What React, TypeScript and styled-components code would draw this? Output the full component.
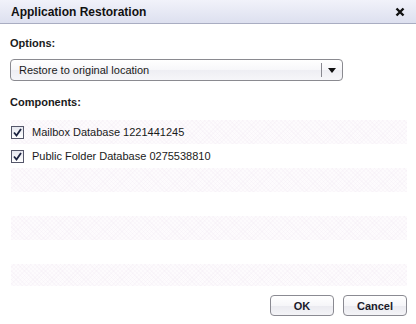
import * as React from 'react';
import styled, { createGlobalStyle } from 'styled-components';

const GlobalStyle = createGlobalStyle`
    html, body {
        margin: 0;
        padding: 0;
        background: #ffffff;
    }
    body {
        font-family: 'Liberation Sans', Arial, sans-serif;
        color: #1a1a1a;
    }
`;

const components = [
    'Mailbox Database 1221441245',
    'Public Folder Database 0275538810',
    '',
    '',
    '',
    '',
    ''
];

const CheckIcon = () => (
    <svg width="9" height="9" viewBox="0 0 9 9">
        <path d="M1 4.5 L3.5 7.5 L8 1" stroke="#1c2340" strokeWidth="1.8" fill="none" />
    </svg>
);

const App = () => (
    <Dialog>
        <GlobalStyle />
        <TitleBar>
            <Title>Application Restoration</Title>
            <CloseButton>
                <svg width="10" height="10" viewBox="0 0 10 10">
                    <path d="M1.5 1.5 L8.5 8.5 M8.5 1.5 L1.5 8.5" stroke="#111" strokeWidth="2.4" />
                </svg>
            </CloseButton>
        </TitleBar>
        <Body>
            <Label>Options:</Label>
            <Select>
                <SelectText>Restore to original location</SelectText>
                <SelectArrow>
                    <svg width="8" height="5" viewBox="0 0 8 5">
                        <path d="M0 0 H8 L4 5 Z" fill="#111" />
                    </svg>
                </SelectArrow>
            </Select>
            <Label>Components:</Label>
            <List>
                {components.map((name, i) => (
                    <Row key={i} striped={i % 2 === 0}>
                        {name && (
                            <>
                                <Checkbox><CheckIcon /></Checkbox>
                                <RowText>{name}</RowText>
                            </>
                        )}
                    </Row>
                ))}
            </List>
            <Footer>
                <Button>OK</Button>
                <Button>Cancel</Button>
            </Footer>
        </Body>
    </Dialog>
);

const Dialog = styled.div`
    width: 416px;
    height: 324px;
    background: #ffffff;
    display: flex;
    flex-direction: column;
    overflow: hidden;
`;

const TitleBar = styled.div`
    height: 23px;
    display: flex;
    align-items: center;
    justify-content: space-between;
    padding: 0 10px 0 11px;
    background: linear-gradient(#f1f2fa, #dde0ef);
    border-bottom: 1px solid #a9adc2;
`;

const Title = styled.div`
    font-size: 12px;
    font-weight: bold;
    color: #111111;
`;

const CloseButton = styled.div`
    display: flex;
    align-items: center;
    margin-right: 1px;
`;

const Body = styled.div`
    display: flex;
    flex-direction: column;
    padding: 0 9px 0 10px;
    flex: 1;
`;

const Label = styled.div`
    font-size: 11px;
    font-weight: bold;
    color: #1a1a1a;
    margin-top: 13px;
    margin-bottom: 10px;
`;

const Select = styled.div`
    width: 331px;
    height: 20px;
    border: 1px solid #8a8a90;
    border-radius: 4px;
    background: linear-gradient(#ffffff 0%, #f7f7fa 50%, #eeeef3 51%, #f6f6f9 100%);
    display: flex;
    align-items: center;
    margin-bottom: 2px;
`;

const SelectText = styled.div`
    flex: 1;
    font-size: 11px;
    padding-left: 8px;
`;

const SelectArrow = styled.div`
    width: 20px;
    height: 14px;
    border-left: 1px solid #888890;
    display: flex;
    align-items: center;
    justify-content: center;
`;

const List = styled.div`
    margin-top: 2px;
    margin-left: 1px;
    height: 166px;
    overflow: hidden;
`;

const Row = styled.div<{ striped: boolean }>`
    height: 24px;
    display: flex;
    align-items: center;
    gap: 8px;
    background-color: ${p => (p.striped ? '#fdfbfd' : '#ffffff')};
    background-image: ${p => (p.striped
        ? 'repeating-linear-gradient(45deg, rgba(238,228,240,0.22) 0 1px, transparent 1px 3px), repeating-linear-gradient(-45deg, rgba(238,228,240,0.2) 0 1px, transparent 1px 3px)'
        : 'none')};
`;

const Checkbox = styled.div`
    width: 11px;
    height: 11px;
    border: 1px solid #55576a;
    background: linear-gradient(#e6e7ef, #ffffff);
    display: flex;
    align-items: center;
    justify-content: center;
`;

const RowText = styled.div`
    font-size: 11px;
    color: #1a1a1a;
`;

const Footer = styled.div`
    display: flex;
    justify-content: flex-end;
    gap: 9px;
    margin-top: 9px;
`;

const Button = styled.div`
    width: 62px;
    height: 19px;
    border: 1px solid #8a8a92;
    border-radius: 4px;
    background: linear-gradient(#ffffff 0%, #f6f6f9 50%, #eaeaf0 51%, #f4f4f7 100%);
    font-size: 11px;
    font-weight: bold;
    color: #1a1a2a;
    display: flex;
    align-items: center;
    justify-content: center;
`;

export default App;
